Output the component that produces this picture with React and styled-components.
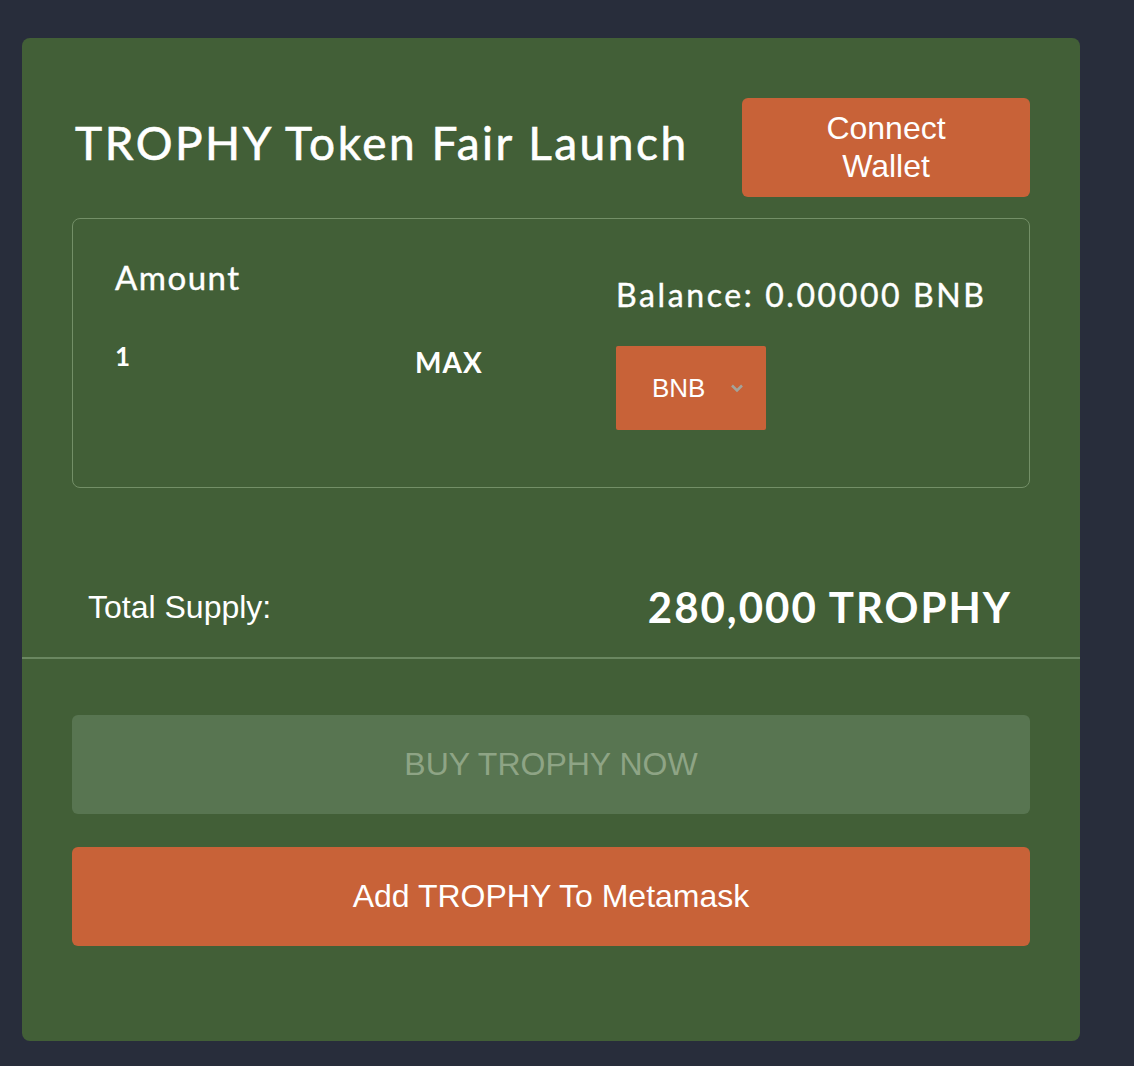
import React, { useState } from 'react';
import styled, { createGlobalStyle } from 'styled-components';

const GlobalStyle = createGlobalStyle`
  body {
    margin: 0;
    background-color: #282d3b;
    font-family: "Liberation Sans", Arial, sans-serif;
  }
`;

const Page = styled.div`
  padding: 38px 0 0 22px;
  min-height: 1066px;
  box-sizing: border-box;
`;

const Card = styled.div`
  width: 1058px;
  height: 1003px;
  box-sizing: border-box;
  background-color: #425f37;
  border-radius: 8px;
  display: flex;
  flex-direction: column;
`;

const TopSection = styled.div`
  padding: 60px 50px 0 50px;
  display: flex;
  flex-direction: column;
`;

const Header = styled.div`
  display: flex;
  justify-content: space-between;
  align-items: center;
`;

const Title = styled.h1`
  margin: 0 0 10px 3px;
  font-family: Lato, "Noto Sans", sans-serif;
  font-weight: 400;
  font-size: 46px;
  color: #ffffff;
  letter-spacing: 2.5px;
  -webkit-text-stroke: 0.6px #ffffff;
`;

const OrangeButton = styled.button`
  background-color: #c86238;
  color: #ffffff;
  border: none;
  border-radius: 6px;
  font-family: "Liberation Sans", Arial, sans-serif;
  font-size: ${(p) => p.size || 32}px;
  cursor: pointer;
  width: ${(p) => p.width || '100%'};
  height: 99px;
  line-height: 1.18;
  padding: 0 40px;
`;

const AmountBox = styled.div`
  margin-top: 21px;
  height: 270px;
  box-sizing: border-box;
  border: 1px solid #738f67;
  border-radius: 8px;
  padding: 38px 42px;
  display: grid;
  grid-template-columns: 501px 1fr;
`;

const Column = styled.div`
  display: flex;
  flex-direction: column;
`;

const Label = styled.div`
  font-family: Lato, "Noto Sans", sans-serif;
  font-size: ${(p) => p.size}px;
  font-weight: ${(p) => p.weight || 400};
  letter-spacing: ${(p) => p.spacing || 0}px;
  color: #ffffff;
  margin-top: ${(p) => p.top || 0}px;
  -webkit-text-stroke: 0.4px #ffffff;
`;

const InputRow = styled.div`
  display: flex;
  align-items: center;
  margin-top: 36px;
`;

const AmountInput = styled.input`
  width: 300px;
  background: transparent;
  border: none;
  outline: none;
  padding: 0;
  color: #ffffff;
  font-family: Lato, "Noto Sans", sans-serif;
  font-size: 26px;
  font-weight: 700;
`;

const MaxButton = styled.button`
  background: none;
  border: none;
  padding: 0;
  color: #ffffff;
  font-family: Lato, "Noto Sans", sans-serif;
  font-size: 28px;
  font-weight: 700;
  letter-spacing: 1px;
  margin-top: 12px;
  cursor: pointer;
`;

const TokenSelect = styled.div`
  margin-top: 32px;
  width: 150px;
  height: 84px;
  background-color: #c86238;
  border-radius: 2px;
  display: flex;
  align-items: center;
  padding-left: 36px;
  box-sizing: border-box;
  gap: 26px;
  color: #ffffff;
  font-size: 26px;
`;

const SupplyRow = styled.div`
  display: flex;
  justify-content: space-between;
  align-items: center;
  padding: 0 18px 0 16px;
  margin-top: 94px;
  margin-bottom: 25px;
`;

const SupplyLabel = styled.span`
  font-size: 32px;
  color: #ffffff;
`;

const SupplyValue = styled.span`
  font-family: Lato, "Noto Sans", sans-serif;
  font-size: 42px;
  font-weight: 700;
  letter-spacing: 2px;
  color: #ffffff;
`;

const Divider = styled.hr`
  margin: 0;
  border: none;
  height: 2px;
  background-color: #6a8760;
`;

const BottomSection = styled.div`
  padding: 56px 50px 0 50px;
  display: flex;
  flex-direction: column;
  gap: 33px;
`;

const DisabledButton = styled.button`
  height: 99px;
  width: 100%;
  border: none;
  border-radius: 6px;
  background-color: #587551;
  color: #8ea485;
  font-family: "Liberation Sans", Arial, sans-serif;
  font-size: 32px;
  cursor: not-allowed;
`;

const Chevron = () => (
  <svg width="12" height="9" viewBox="0 0 12 9">
    <path d="M1 1.5 L6 6.5 L11 1.5" fill="none" stroke="#a3a39b" strokeWidth="2.6" />
  </svg>
);

export default function App() {
  const [amount, setAmount] = useState('1');

  return (
    <Page>
      <GlobalStyle />
      <Card>
        <TopSection>
          <Header>
            <Title>TROPHY Token Fair Launch</Title>
            <OrangeButton width="288px" type="button">Connect Wallet</OrangeButton>
          </Header>
          <AmountBox>
            <Column>
              <Label size={33} spacing={1.5}>Amount</Label>
              <InputRow>
                <AmountInput value={amount} onChange={(e) => setAmount(e.target.value)} />
                <MaxButton type="button">MAX</MaxButton>
              </InputRow>
            </Column>
            <Column>
              <Label size={32} spacing={2.6} top={18}>Balance: 0.00000 BNB</Label>
              <TokenSelect>
                BNB
                <Chevron />
              </TokenSelect>
            </Column>
          </AmountBox>
          <SupplyRow>
            <SupplyLabel>Total Supply:</SupplyLabel>
            <SupplyValue>280,000 TROPHY</SupplyValue>
          </SupplyRow>
        </TopSection>
        <Divider />
        <BottomSection>
          <DisabledButton type="button" disabled>BUY TROPHY NOW</DisabledButton>
          <OrangeButton type="button">Add TROPHY To Metamask</OrangeButton>
        </BottomSection>
      </Card>
    </Page>
  );
}
